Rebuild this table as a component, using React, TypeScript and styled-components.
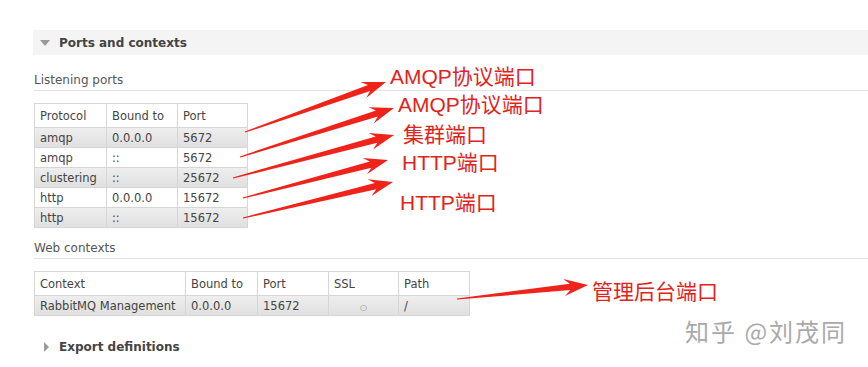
import styled, { createGlobalStyle } from 'styled-components';

const GlobalStyle = createGlobalStyle`
  body {
    margin: 0;
    background: #fff;
    font-family: 'DejaVu Sans', Verdana, sans-serif;
  }
`;

type Arrow = { tx: number; ty: number; hx: number; hy: number };

const listeningCols = [
  { title: 'Protocol', width: 72 },
  { title: 'Bound to', width: 71 },
  { title: 'Port', width: 70 },
];

const listeningRows = [
  ['amqp', '0.0.0.0', '5672'],
  ['amqp', '::', '5672'],
  ['clustering', '::', '25672'],
  ['http', '0.0.0.0', '15672'],
  ['http', '::', '15672'],
];

const contextCols = [
  { title: 'Context', width: 151 },
  { title: 'Bound to', width: 72 },
  { title: 'Port', width: 71 },
  { title: 'SSL', width: 70 },
  { title: 'Path', width: 71 },
];

const arrows: Arrow[] = [
  { tx: 245, ty: 132, hx: 386, hy: 82 },
  { tx: 240, ty: 157, hx: 394, hy: 108 },
  { tx: 233, ty: 178, hx: 394, hy: 135 },
  { tx: 243, ty: 198, hx: 388, hy: 160 },
  { tx: 243, ty: 218, hx: 393, hy: 182 },
  { tx: 457, ty: 299, hx: 588, hy: 285 },
];

const labels = [
  { text: 'AMQP协议端口', x: 390, y: 64 },
  { text: 'AMQP协议端口', x: 398, y: 92 },
  { text: '集群端口', x: 403, y: 122 },
  { text: 'HTTP端口', x: 402, y: 150 },
  { text: 'HTTP端口', x: 400, y: 190 },
  { text: '管理后台端口', x: 592, y: 279 },
];

// tapered arrow: thin tail, thick shaft near the barbed head
const arrowPoints = ({ tx, ty, hx, hy }: Arrow) => {
  const len = Math.hypot(hx - tx, hy - ty);
  const dx = (hx - tx) / len;
  const dy = (hy - ty) / len;
  const nx = -dy;
  const ny = dx;
  const at = (along: number, side: number) =>
    `${(tx + dx * along + nx * side).toFixed(1)},${(ty + dy * along + ny * side).toFixed(1)}`;
  const base = len - 22;
  return [
    at(0, 0.6),
    at(base + 4, 3.2),
    at(base - 2, 8.5),
    at(len, 0),
    at(base - 2, -8.5),
    at(base + 4, -3.2),
    at(0, -0.6),
  ].join(' ');
};

const App = () => {
  return (
    <Page>
      <GlobalStyle />
      <SectionHeader $open>
        <Toggle $open />
        Ports and contexts
      </SectionHeader>
      <SectionBody>
        <SubHeading>Listening ports</SubHeading>
        <Table>
          <thead>
            <tr>
              {listeningCols.map(c => (
                <Th key={c.title} $width={c.width}>
                  {c.title}
                </Th>
              ))}
            </tr>
          </thead>
          <tbody>
            {listeningRows.map((r, i) => (
              <Row key={i} $alt={i % 2 === 0}>
                {r.map((v, j) => (
                  <Td key={j}>{v}</Td>
                ))}
              </Row>
            ))}
          </tbody>
        </Table>

        <SubHeading>Web contexts</SubHeading>
        <Table>
          <thead>
            <tr>
              {contextCols.map(c => (
                <Th key={c.title} $width={c.width}>
                  {c.title}
                </Th>
              ))}
            </tr>
          </thead>
          <tbody>
            <Row $alt>
              <Td>RabbitMQ Management</Td>
              <Td>0.0.0.0</Td>
              <Td>15672</Td>
              <Td $center>
                <SslMark>○</SslMark>
              </Td>
              <Td>/</Td>
            </Row>
          </tbody>
        </Table>
      </SectionBody>

      <SectionHeader $open={false}>
        <Toggle $open={false} />
        Export definitions
      </SectionHeader>

      <Overlay width="868" height="367" viewBox="0 0 868 367">
        {arrows.map((a, i) => (
          <polygon key={i} points={arrowPoints(a)} fill="#f0231b" />
        ))}
      </Overlay>
      {labels.map((l, i) => (
        <Label key={i} $x={l.x} $y={l.y}>
          {l.text}
        </Label>
      ))}
      <Watermark>知乎 @刘茂同</Watermark>
    </Page>
  );
};

const Page = styled.div`
  position: relative;
  width: 868px;
  height: 367px;
  overflow: hidden;
  box-sizing: border-box;
  padding: 30px 0 0 33px;
`;

const SectionHeader = styled.div<{ $open: boolean }>`
  display: flex;
  align-items: center;
  gap: 9px;
  height: 25px;
  margin-top: ${props => (props.$open ? '0' : '18px')};
  padding-left: 7px;
  background: ${props => (props.$open ? '#f4f4f4' : 'transparent')};
  color: #444;
  font-size: 12px;
  font-weight: bold;
`;

const Toggle = styled.span<{ $open: boolean }>`
  display: block;
  width: 0;
  height: 0;
  margin-left: ${props => (props.$open ? '0' : '4px')};
  margin-right: ${props => (props.$open ? '0' : '1px')};
  border-style: solid;
  border-color: ${props =>
    props.$open
      ? '#9a9a9a transparent transparent transparent'
      : 'transparent transparent transparent #9a9a9a'};
  border-width: ${props => (props.$open ? '6px 5px 0 5px' : '5px 0 5px 5px')};
`;

const SectionBody = styled.div`
  padding-left: 1px;
`;

const SubHeading = styled.h3`
  margin: 18px 0 12px;
  padding-bottom: 3px;
  border-bottom: 1px solid #e2e2e2;
  color: #555;
  font-size: 12px;
  font-weight: normal;
  line-height: 14px;

  & + table + & {
    margin-top: 13px;
  }
`;

const Table = styled.table`
  border-collapse: collapse;
  table-layout: fixed;
  border: 1px solid #cfcfcf;
  color: #444;
  font-size: 11.5px;
`;

const Th = styled.th<{ $width: number }>`
  width: ${props => props.$width - 11}px;
  height: 23px;
  padding: 0 5px;
  border: 1px solid #d6d6d6;
  background: #fff;
  font-weight: normal;
  text-align: left;
  white-space: nowrap;
`;

const Row = styled.tr<{ $alt: boolean }>`
  background: ${props =>
    props.$alt ? 'linear-gradient(to bottom, #eeeeee, #dfdfdf)' : '#fff'};
`;

const Td = styled.td<{ $center?: boolean }>`
  height: 19px;
  padding: 0 5px;
  border: 1px solid #d6d6d6;
  text-align: ${props => (props.$center ? 'center' : 'left')};
  white-space: nowrap;
`;

const SslMark = styled.span`
  color: #888;
  font-size: 8px;
`;

const Overlay = styled.svg`
  position: absolute;
  left: 0;
  top: 0;
  pointer-events: none;
`;

const Label = styled.div<{ $x: number; $y: number }>`
  position: absolute;
  left: ${props => props.$x}px;
  top: ${props => props.$y}px;
  color: #e2231c;
  font-family: 'Liberation Sans', 'Noto Sans CJK SC', sans-serif;
  font-size: 21px;
  line-height: 26px;
  white-space: nowrap;
`;

const Watermark = styled.div`
  position: absolute;
  left: 685px;
  top: 315px;
  color: #a9a9a9;
  font-family: 'Noto Sans CJK SC', sans-serif;
  font-size: 24px;
  line-height: 32px;
  letter-spacing: 2px;
  white-space: nowrap;
`;

export default App;
